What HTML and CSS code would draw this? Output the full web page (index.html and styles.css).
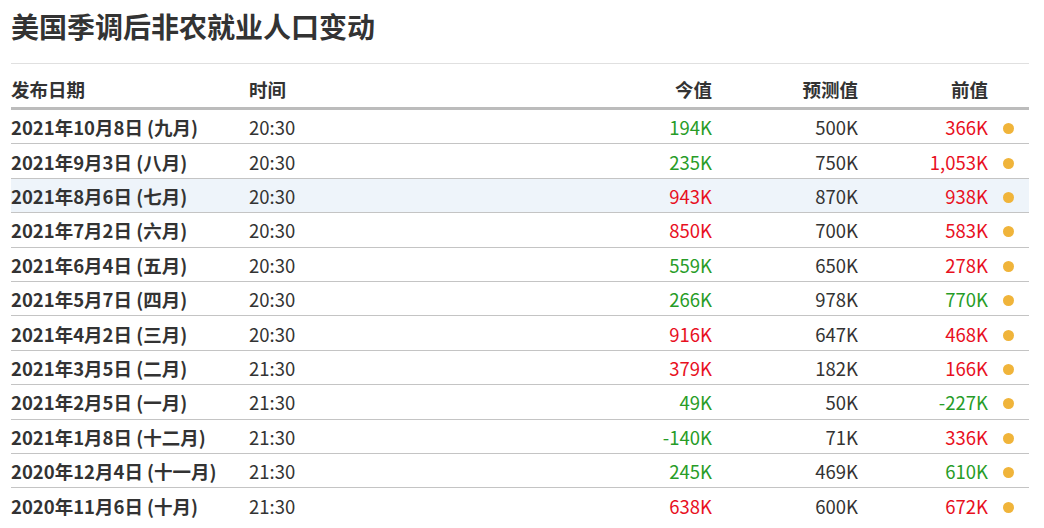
FILE: index.html
```html
<!DOCTYPE html>
<html lang="zh">
<head>
<meta charset="utf-8">
<link rel="stylesheet" href="styles.css">
</head>
<body>
<div class="page">
  <h1 class="title">美国季调后非农就业人口变动</h1>
  <div class="table">
    <div class="row head">
      <div class="c date">发布日期</div>
      <div class="c time">时间</div>
      <div class="c num">今值</div>
      <div class="c num">预测值</div>
      <div class="c num">前值</div>
      <div class="c dotc"></div>
    </div>
    <div class="row"><div class="c date">2021年10月8日 (九月)</div><div class="c time">20:30</div><div class="c num g">194K</div><div class="c num">500K</div><div class="c num r">366K</div><div class="c dotc"><span class="dot"></span></div></div>
    <div class="row"><div class="c date">2021年9月3日 (八月)</div><div class="c time">20:30</div><div class="c num g">235K</div><div class="c num">750K</div><div class="c num r">1,053K</div><div class="c dotc"><span class="dot"></span></div></div>
    <div class="row hl"><div class="c date">2021年8月6日 (七月)</div><div class="c time">20:30</div><div class="c num r">943K</div><div class="c num">870K</div><div class="c num r">938K</div><div class="c dotc"><span class="dot"></span></div></div>
    <div class="row"><div class="c date">2021年7月2日 (六月)</div><div class="c time">20:30</div><div class="c num r">850K</div><div class="c num">700K</div><div class="c num r">583K</div><div class="c dotc"><span class="dot"></span></div></div>
    <div class="row"><div class="c date">2021年6月4日 (五月)</div><div class="c time">20:30</div><div class="c num g">559K</div><div class="c num">650K</div><div class="c num r">278K</div><div class="c dotc"><span class="dot"></span></div></div>
    <div class="row"><div class="c date">2021年5月7日 (四月)</div><div class="c time">20:30</div><div class="c num g">266K</div><div class="c num">978K</div><div class="c num g">770K</div><div class="c dotc"><span class="dot"></span></div></div>
    <div class="row"><div class="c date">2021年4月2日 (三月)</div><div class="c time">20:30</div><div class="c num r">916K</div><div class="c num">647K</div><div class="c num r">468K</div><div class="c dotc"><span class="dot"></span></div></div>
    <div class="row"><div class="c date">2021年3月5日 (二月)</div><div class="c time">21:30</div><div class="c num r">379K</div><div class="c num">182K</div><div class="c num r">166K</div><div class="c dotc"><span class="dot"></span></div></div>
    <div class="row"><div class="c date">2021年2月5日 (一月)</div><div class="c time">21:30</div><div class="c num g">49K</div><div class="c num">50K</div><div class="c num g">-227K</div><div class="c dotc"><span class="dot"></span></div></div>
    <div class="row"><div class="c date">2021年1月8日 (十二月)</div><div class="c time">21:30</div><div class="c num g">-140K</div><div class="c num">71K</div><div class="c num r">336K</div><div class="c dotc"><span class="dot"></span></div></div>
    <div class="row"><div class="c date">2020年12月4日 (十一月)</div><div class="c time">21:30</div><div class="c num g">245K</div><div class="c num">469K</div><div class="c num g">610K</div><div class="c dotc"><span class="dot"></span></div></div>
    <div class="row last"><div class="c date">2020年11月6日 (十月)</div><div class="c time">21:30</div><div class="c num r">638K</div><div class="c num">600K</div><div class="c num r">672K</div><div class="c dotc"><span class="dot"></span></div></div>
  </div>
</div>
</body>
</html>
```

FILE: styles.css
```css
html, body {
  margin: 0;
  padding: 0;
  background: #fff;
}
body {
  font-family: "Noto Sans CJK SC", "Noto Sans", sans-serif;
  color: #333;
}
.page {
  width: 1018px;
  margin-left: 11px;
}
.title {
  margin: 0;
  height: 64px;
  box-sizing: border-box;
  padding-top: 8px;
  font-size: 28px;
  line-height: 36px;
  font-weight: bold;
  color: #333;
  border-bottom: 1px solid #e0e0e0;
}
.row {
  display: grid;
  grid-template-columns: 238px 1fr 150px 146px 130px 41px;
  align-items: center;
  height: 34.4px;
  box-sizing: border-box;
  border-bottom: 1px solid #c4c4c4;
  font-size: 18.5px;
  line-height: 22px;
  padding-top: 1px;
}
.row.last {
  border-bottom: none;
}
.row.head {
  height: 46px;
  border-bottom: 3px solid #bcbcbc;
  font-weight: bold;
  padding-top: 7px;
}
.row.hl {
  background: #eef4fa;
}
.c.date {
  font-weight: bold;
}
.c.num {
  text-align: right;
}
.g { color: #279c27; }
.r { color: #e8101e; }
.dotc {
  display: flex;
  justify-content: flex-start;
  padding-left: 15px;
  padding-top: 3px;
}
.dot {
  width: 11px;
  height: 11px;
  border-radius: 50%;
  background: #f0b43a;
}
```
